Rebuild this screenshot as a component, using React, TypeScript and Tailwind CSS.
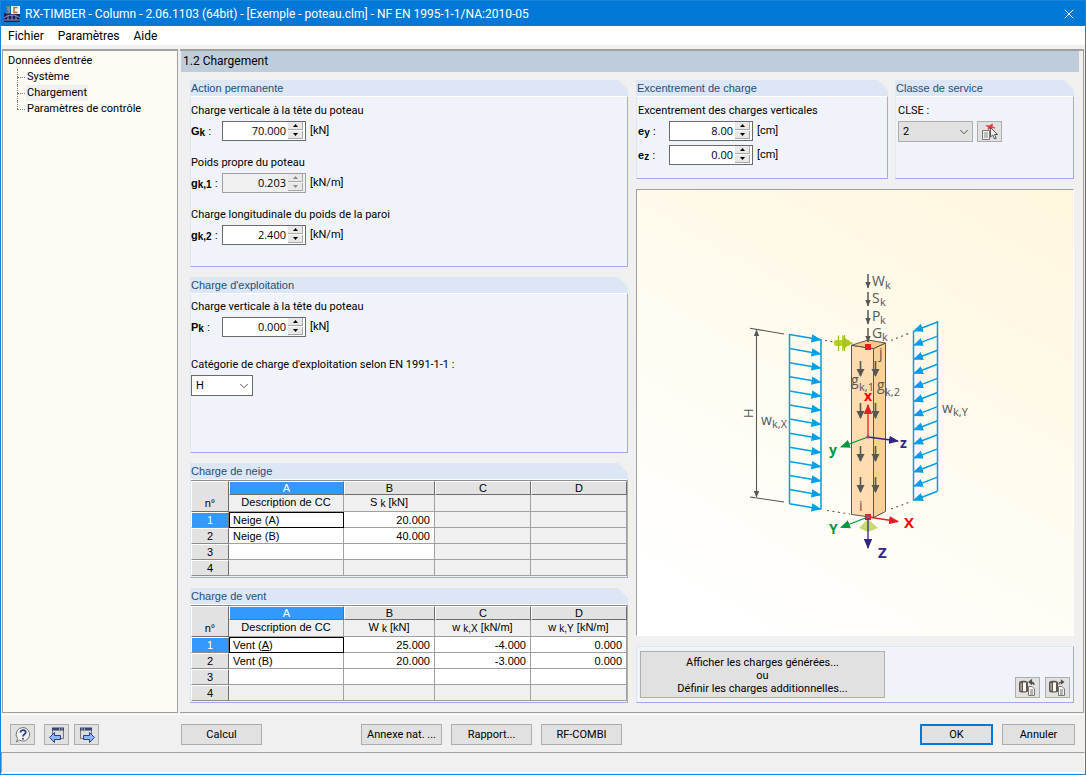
import React, { useState } from "react";
import { X, ChevronDown } from "lucide-react";

const loads = Array.from({ length: 13 }, (_, i) => i);

function Group({ title, className = "", children }: { title: string; className?: string; children: React.ReactNode }) {
  return (
    <section className={`flex flex-col ${className}`}>
      <h2 className="h-4 bg-[#dce6f4] pl-px font-['Liberation_Sans',sans-serif] text-[11px] leading-4 text-[#1f4e79] [clip-path:polygon(0_0,calc(100%-10px)_0,100%_10px,100%_100%,0_100%)]">
        {title}
      </h2>
      <div className="grow border-t border-r border-b border-l border-t-white border-r-[#a6a6e8] border-b-[#a6a6e8] border-l-[#dce6f4] bg-[#f0f4fa]">
        {children}
      </div>
    </section>
  );
}

function Sub({ children }: { children: React.ReactNode }) {
  return <span className="relative top-px text-[10px] leading-none">{children}</span>;
}

type SpinProps = { id: string; name: string; sub: string; unit: string; value: string; digits: number; disabled?: boolean };

function SpinField({ id, name, sub, unit, value, digits, disabled }: SpinProps) {
  const [current, setCurrent] = useState(value);
  const step = (delta: number) => setCurrent((Number(current) + delta).toFixed(digits));
  const arrow = disabled ? "#8a8a8a" : "#000";

  return (
    <div className="flex h-5 items-center">
      <label htmlFor={id} className="w-[31px] font-['Liberation_Sans',sans-serif] text-[11px] font-bold whitespace-nowrap">
        {name}<Sub>{sub}</Sub> <span className="font-normal">:</span>
      </label>
      <div className={`flex h-5 w-[84px] border ${disabled ? "border-[#a0a0a0] bg-[#f0f0f0]" : "border-[#6a6a6a] bg-white"}`}>
        <input
          id={id}
          value={current}
          disabled={disabled}
          onChange={e => setCurrent(e.target.value)}
          className="w-[63px] min-w-0 text-right font-['Open_Sans',sans-serif] text-[11px] outline-none"
        />
        <span className="ml-0.5 flex flex-col gap-px">
          <button aria-label="Plus" disabled={disabled} onClick={() => step(1)} className="flex h-2 w-[15px] items-center justify-center border-r border-b border-[#a8a8a8] bg-[#e8e8e8]">
            <svg width="5" height="3" viewBox="0 0 5 3"><path d="M2.5 0 5 3H0z" fill={arrow} /></svg>
          </button>
          <button aria-label="Moins" disabled={disabled} onClick={() => step(-1)} className="flex h-2 w-[15px] items-center justify-center border-r border-b border-[#a8a8a8] bg-[#e8e8e8]">
            <svg width="5" height="3" viewBox="0 0 5 3"><path d="M0 0h5L2.5 3z" fill={arrow} /></svg>
          </button>
        </span>
      </div>
      <span className="ml-1 leading-[18px]">{unit}</span>
    </div>
  );
}

function Select({ id, options, className }: { id: string; options: string[]; className: string }) {
  return (
    <div className={`grid h-[21px] items-center border ${className}`}>
      <select id={id} className="col-start-1 row-start-1 h-full w-full appearance-none pl-1 text-[11px] outline-none">
        {options.map(o => <option key={o}>{o}</option>)}
      </select>
      <ChevronDown size={14} strokeWidth={1.5} className="pointer-events-none col-start-1 row-start-1 mr-px justify-self-end text-[#404040]" />
    </div>
  );
}

function Button({ children, className }: { children: React.ReactNode; className: string }) {
  return <button className={`flex h-[21px] items-center justify-center bg-[#e1e1e1] whitespace-nowrap ${className}`}>{children}</button>;
}

function IconButton({ label, children }: { label: string; children: React.ReactNode }) {
  return (
    <button aria-label={label} className="flex h-[21px] w-[25px] items-center justify-center border border-[#adadad] bg-[#e1e1e1]">
      {children}
    </button>
  );
}

type TableProps = { heads: React.ReactNode[]; rows: React.ReactNode[][]; columns: number };

function LoadTable({ heads, rows, columns }: TableProps) {
  return (
    <table className="mb-px w-full table-fixed border-separate border-spacing-0 border-t border-[#8c8c8c] bg-[#f0f0f0] font-['Liberation_Sans',sans-serif] text-[11px] leading-3">
      <colgroup>
        <col className="w-[38px]" />
        <col className="w-[115px]" />
        <col className="w-[91px]" />
        <col />
        <col />
      </colgroup>
      <thead>
        <tr className="h-[14px]">
          <th rowSpan={2} className="border-t border-r border-b border-l border-t-white border-r-[#6e6e6e] border-b-[#6e6e6e] border-l-white bg-[#e2e2e2] p-0 pb-0.5 align-bottom font-normal">n°</th>
          {["A", "B", "C", "D"].map((letter, i) => (
            <th
              key={letter}
              className={`border-t border-r border-b border-l border-t-white border-r-[#6e6e6e] border-b-[#6e6e6e] border-l-white p-0 font-normal ${i === 0 ? "bg-[#3399ff] text-white" : "bg-[#e2e2e2]"}`}
            >
              {letter}
            </th>
          ))}
        </tr>
        <tr className="h-[17px]">
          {heads.map((head, i) => (
            <th key={i} className="border-r border-b border-[#a0a0a0] p-0 pb-0.5 font-normal whitespace-nowrap">{head}</th>
          ))}
        </tr>
      </thead>
      <tbody>
        {rows.map((row, r) => (
          <tr key={r} className="h-4">
            <th className={`border-t border-r border-b border-l border-t-white border-r-[#6e6e6e] border-b-[#8c8c8c] border-l-white p-0 font-normal ${r === 0 ? "bg-[#3399ff] text-white" : "bg-[#e2e2e2]"}`}>{r + 1}</th>
            {row.map((cell, c) => (
              <td
                key={c}
                className={`border-r border-b border-[#a0a0a0] px-1 py-0 ${c > 0 ? "text-right" : ""} ${r < 3 && c < columns ? "bg-white" : ""} ${r === 0 && c === 0 ? "outline outline-[1px] -outline-offset-1 outline-black" : ""}`}
              >
                {cell}
              </td>
            ))}
          </tr>
        ))}
      </tbody>
    </table>
  );
}

function SymbolText({ x, y, main, sub, dx, dy = 3 }: { x: number; y: number; main: string; sub: string; dx: number; dy?: number }) {
  return (
    <g fill="#575756">
      <text x={x} y={y} fontSize="14">{main}</text>
      <text x={x + dx} y={y + dy} fontSize="11">{sub}</text>
    </g>
  );
}

function Marker({ id, color }: { id: string; color: string }) {
  return (
    <marker id={id} markerUnits="userSpaceOnUse" markerWidth="10" markerHeight="9" refX="9" refY="4.5" orient="auto">
      <path d="M0 .3 10 4.5 0 8.7z" fill={color} />
    </marker>
  );
}

function ColumnDiagram() {
  return (
    <svg width="436" height="445" viewBox="0 0 436 445" className="font-['Open_Sans',sans-serif]" role="img" aria-label="Poteau">
      <defs>
        <Marker id="blue" color="#009fe3" />
        <Marker id="red" color="#e31e24" />
        <Marker id="green" color="#009640" />
        <Marker id="navy" color="#312783" />
        <marker id="gray" markerUnits="userSpaceOnUse" markerWidth="7" markerHeight="6" refX="6" refY="3" orient="auto-start-reverse">
          <path d="M0 .3 6.5 3 0 5.7z" fill="#575756" />
        </marker>
        <marker id="dark" markerUnits="userSpaceOnUse" markerWidth="9" markerHeight="9" refX="7" refY="4.5" orient="auto">
          <path d="M0 .5 8 4.5 0 8.5z" fill="#575756" />
        </marker>
      </defs>

      {/* height dimension */}
      <g stroke="#575756" strokeWidth="1.1" fill="none">
        <path d="M113 138.3 147 144M113 307 147 312" />
        <path d="M119.5 140V307" markerStart="url(#gray)" markerEnd="url(#gray)" />
        <g strokeDasharray="2 3.5">
          <path d="M188 150.5 200 152.5M254 150.5 274 142.5M190 320.5 213 324M254 319 273 312" />
        </g>
      </g>
      <text transform="translate(116 228) rotate(-90)" fontSize="13" fill="#575756">H</text>
      <SymbolText x={124} y={235} main="w" sub="k,X" dx={11} />
      <SymbolText x={305} y={223} main="w" sub="k,Y" dx={11} />

      {/* wind loads */}
      <g stroke="#009fe3" strokeWidth="1.5">
        <path d="M152.5 144V314M184 149V319.5M276.5 141V310.5M300.5 131V301" />
        {loads.map(i => (
          <g key={i}>
            <line x1="152.5" y1={144.5 + i * 14.1} x2="183.5" y2={149.8 + i * 14.1} markerEnd="url(#blue)" />
            <line x1="300.5" y1={132 + i * 14.1} x2="277" y2={141 + i * 14.1} markerEnd="url(#blue)" />
          </g>
        ))}
      </g>

      {/* timber column */}
      <g stroke="#575756" strokeWidth="1" strokeLinejoin="round">
        <path d="M214.5 155.3 236.5 158.5V327.5L214.5 324.5z" fill="#fddcaf" />
        <path d="M236.5 158.5 248.5 153V321.5L236.5 327.5z" fill="#fdd093" />
        <path d="M214.5 155.3 231 150 248.5 153 236.5 158.5z" fill="#fbc886" />
      </g>
      <g fill="#afca0b">
        <path d="M205 149.5V145l9 8-9 8v-4.5z" opacity=".85" />
        <path d="M206 150 217 153 206 157z" />
        <rect x="197" y="150" width="16" height="6" rx="2" opacity=".85" />
      </g>
      <path d="M201.5 145.5V161M207.5 145V161" stroke="#95c11f" strokeWidth="1.2" />

      {/* vertical loads */}
      <g stroke="#575756" strokeWidth="1.5">
        {[84, 102, 120, 138].map(y => <line key={y} x1="231" y1={y} x2="231" y2={y + 14} markerEnd="url(#gray)" />)}
      </g>
      <SymbolText x={235} y={96} main="W" sub="k" dx={13} />
      <SymbolText x={235} y={113} main="S" sub="k" dx={8} />
      <SymbolText x={235} y={131} main="P" sub="k" dx={8} />
      <SymbolText x={235} y={148} main="G" sub="k" dx={10} />
      <g stroke="#575756" strokeWidth="1.6">
        {[171, 213, 256, 287].map(y => (
          <g key={y}>
            <line x1="223.5" y1={y} x2="223.5" y2={y + 15} markerEnd="url(#dark)" />
            <line x1="238.5" y1={y} x2="238.5" y2={y + 15} markerEnd="url(#dark)" />
          </g>
        ))}
      </g>
      <SymbolText x={214} y={195} main="g" sub="k,1" dx={8} dy={6} />
      <SymbolText x={240} y={200} main="g" sub="k,2" dx={8} dy={6} />
      <text x="242" y="168" fontSize="14" fill="#575756">j</text>
      <text x="222" y="321" fontSize="14" fill="#575756">i</text>

      {/* local axes */}
      <g strokeWidth="1.3">
        <line x1="231" y1="247" x2="231" y2="215" stroke="#e31e24" markerEnd="url(#red)" />
        <line x1="231" y1="247" x2="204" y2="257" stroke="#009640" markerEnd="url(#green)" />
        <line x1="231" y1="247" x2="261" y2="251" stroke="#312783" markerEnd="url(#navy)" />
      </g>
      <circle cx="231" cy="247" r="1.8" fill="#a3478d" />
      <rect x="228" y="154" width="6" height="6" fill="#e31e24" />

      {/* global axes and support */}
      <path d="M231 329 241 338 231 342 222 338z" fill="#c8d96f" />
      <g strokeWidth="1.3">
        <line x1="231" y1="327" x2="204" y2="337.5" stroke="#009640" markerEnd="url(#green)" />
        <line x1="231" y1="327" x2="261" y2="331.5" stroke="#e31e24" markerEnd="url(#red)" />
      </g>
      <rect x="228" y="324" width="6" height="6" fill="#e31e24" />
      <line x1="231" y1="327" x2="231" y2="358" stroke="#312783" strokeWidth="1.3" markerEnd="url(#navy)" />
      <circle cx="231" cy="327" r="1.8" fill="#a3478d" />
      <g fontSize="14" fontWeight="700">
        <text x="227" y="211" fill="#ff0000">x</text>
        <text x="192" y="265" fill="#009640">y</text>
        <text x="263" y="258" fill="#312783">z</text>
        <text x="192" y="344" fill="#009640">Y</text>
        <text x="267" y="338" fontSize="15" fill="#ff0000">X</text>
        <text x="241" y="368" fontSize="15" fill="#312783">Z</text>
      </g>
    </svg>
  );
}

function LibraryIcon({ save }: { save?: boolean }) {
  return (
    <svg width="19" height="18" viewBox="0 0 19 18">
      <path d="M1 3.5C1 1 10 1 10 3.5V12C10 14 1 14 1 12z" fill="#5f564e" />
      <path d="M5 3.5h3v8.8H5z" fill="#fbf8f4" />
      <path d="M2.2 4h1.800v7.8H2.200z" fill="#a19a93" />
      <path d="M10.5 7.5h3.5l2.5 2.5v6.5h-6z" fill="#f4f4f4" stroke="#777" />
      <path d="M12 11h3M12 13h3M12 15h3" stroke="#777" />
      {save
        ? <path d="M11 5.5C11 3.5 12.5 3 14.5 3M13.5 1.500 15.500 3 13.500 4.500z" fill="none" stroke="#4d4d4d" strokeWidth="1.2" />
        : <path d="M16 6C16 3.500 14.500 3 12 3M13.500 1 11 3l2.500 2z" fill="#4d4d4d" stroke="#4d4d4d" strokeWidth="1.2" />}
    </svg>
  );
}

function WindowArrowIcon({ forward }: { forward?: boolean }) {
  return (
    <svg width="18" height="18" viewBox="0 0 18 18">
      <g transform={forward ? "translate(18 0) scale(-1 1)" : undefined}>
        <path d="M4.5 2.5h11v10h-11z" fill="#dcdcdc" stroke="#777" />
        <path d="M4 1.5h12v3H4z" fill="#39436f" />
        <path d="M11 3h1M13.5 3h1" stroke="#fff" />
        <path d="M1.5 11.5 6.5 6.5v3h6v4h-6v3z" fill="#8fb4f7" stroke="#22408f" strokeLinejoin="round" />
      </g>
    </svg>
  );
}

export default function App() {
  const snow = [["Neige (A)", "20.000", "", ""], ["Neige (B)", "40.000", "", ""], ["", "", "", ""], ["", "", "", ""]];
  const wind = [
    [<span key="a">Vent (<span className="underline">A</span>)</span>, "25.000", "-4.000", "0.000"],
    ["Vent (B)", "20.000", "-3.000", "0.000"],
    ["", "", "", ""],
    ["", "", "", ""],
  ];

  return (
    <div className="flex min-h-screen flex-col border border-[#1883d7] bg-[#f0f0f0] font-[Roboto,sans-serif] text-[11px] leading-4 text-black">
      <header className="flex h-[25px] items-center bg-[#0078d7] pr-2 pl-[3px] text-[12px] text-white">
        <svg width="16" height="16" viewBox="0 0 16 16">
          <path d="M0 7h16v9H0z" fill="#14245c" />
          <path d="M7 0h9v8H7z" fill="#f3efe9" />
          <path d="M13.5 1.5H10v5h3.5" fill="none" stroke="#b07040" strokeWidth="1.5" />
          <path d="M2 1h3v2H3.5v1H5v3H2" fill="none" stroke="#b98e78" strokeWidth="1.2" />
          <path d="M0 12c4-4 12-4 16 0M0 14h16M4 10v4M8 9v5M12 10v4" fill="none" stroke="#a9b4d3" strokeWidth=".8" />
        </svg>
        <h1 className="ml-[5px] grow">RX-TIMBER - Column - 2.06.1103 (64bit) - [Exemple - poteau.clm] - NF EN 1995-1-1/NA:2010-05</h1>
        <button aria-label="Fermer"><X size={16} strokeWidth={1.5} /></button>
      </header>
      <nav className="flex h-[19px] items-center gap-3.5 bg-white pl-[7px] text-[12px]">
        <button>Fichier</button>
        <button>Paramètres</button>
        <button>Aide</button>
      </nav>

      <main className="mt-1 flex grow gap-0.5 px-px">
        <aside className="w-[176px] shrink-0 border border-t-2 border-[#a0a0a0] bg-[#fcfbf3] pt-0.5">
          <p className="pl-[5px]">Données d'entrée</p>
          <ul className="ml-3.5">
            {["Système", "Chargement", "Paramètres de contrôle"].map((item, i) => (
              <li key={item} className="flex h-4 items-center">
                <span className={`relative w-[9px] self-stretch after:absolute after:top-2 after:left-0 after:w-2 after:border-t after:border-dotted after:border-[#808080] before:absolute before:top-0 before:left-0 before:border-l before:border-dotted before:border-[#808080] ${i === 2 ? "before:h-2" : "before:h-full"}`} />
                <a href="#" className={`px-px ${item === "Chargement" ? "bg-[#f0f0f0]" : ""}`}>{item}</a>
              </li>
            ))}
          </ul>
        </aside>

        <section className="flex grow flex-col border-t-2 border-r border-b border-[#a0a0a0] pl-px">
          <h2 className="mr-1 h-[21px] bg-[#bfcddb] pl-0.5 text-[12px] leading-[21px]">1.2 Chargement</h2>
          <div className="grid grow grid-cols-2 gap-2 px-[9px] pt-2 pb-[9px]">
            <div className="flex flex-col gap-2.5">
              <Group title="Action permanente">
                <div className="flex flex-col gap-[13px] pt-[5px] pb-[21px]">
                  <div className="flex flex-col gap-px">
                    <p className="leading-[18px]">Charge verticale à la tête du poteau</p>
                    <SpinField id="gk" name="G" sub="k" unit="[kN]" value="70.000" digits={3} />
                  </div>
                  <div className="flex flex-col gap-px">
                    <p className="leading-[18px]">Poids propre du poteau</p>
                    <SpinField id="gk1" name="g" sub="k,1" unit="[kN/m]" value="0.203" digits={3} disabled />
                  </div>
                  <div className="flex flex-col gap-px">
                    <p className="leading-[18px]">Charge longitudinale du poids de la paroi</p>
                    <SpinField id="gk2" name="g" sub="k,2" unit="[kN/m]" value="2.400" digits={3} />
                  </div>
                </div>
              </Group>

              <Group title="Charge d'exploitation" className="grow">
                <div className="flex flex-col gap-px pt-1">
                  <p className="leading-[18px]">Charge verticale à la tête du poteau</p>
                  <SpinField id="pk" name="P" sub="k" unit="[kN]" value="0.000" digits={3} />
                  <label htmlFor="category" className="mt-[18px] leading-[18px]">Catégorie de charge d'exploitation selon EN 1991-1-1 :</label>
                  <Select id="category" options={["H", "A", "B", "C"]} className="w-[62px] border-[#6a6a6a] bg-white" />
                </div>
              </Group>

              <Group title="Charge de neige">
                <LoadTable heads={["Description de CC", <>S <Sub>k</Sub> [kN]</>, "", ""]} rows={snow} columns={2} />
              </Group>

              <Group title="Charge de vent">
                <LoadTable
                  heads={["Description de CC", <>W <Sub>k</Sub> [kN]</>, <>w <Sub>k,X</Sub> [kN/m]</>, <>w <Sub>k,Y</Sub> [kN/m]</>]}
                  rows={wind}
                  columns={4}
                />
              </Group>
            </div>

            <div className="flex flex-col gap-2.5">
              <div className="flex gap-[7px]">
                <Group title="Excentrement de charge" className="grow">
                  <div className="flex flex-col gap-px pt-[5px] pb-[13px] pl-px">
                    <p className="leading-[18px]">Excentrement des charges verticales</p>
                    <div className="flex flex-col gap-1">
                      <SpinField id="ey" name="e" sub="y" unit="[cm]" value="8.00" digits={2} />
                      <SpinField id="ez" name="e" sub="z" unit="[cm]" value="0.00" digits={2} />
                    </div>
                  </div>
                </Group>
                <Group title="Classe de service" className="w-[179px]">
                  <div className="flex flex-col gap-px pt-[5px] pl-0.5">
                    <label htmlFor="clse" className="leading-[18px]">CLSE :</label>
                    <div className="flex gap-1">
                      <Select id="clse" options={["2", "1", "3"]} className="w-[75px] border-[#adadad] bg-[#e1e1e1]" />
                      <IconButton label="Détails">
                        <svg width="18" height="18" viewBox="0 0 18 18">
                          <path d="M1.5 7.5h7v9h-7z" fill="#f4f4f4" stroke="#777" />
                          <path d="M3 10h4M3 12h4M3 14h4" stroke="#888" />
                          <path d="M5 2.5 8 3l3.5-2L11 3.5 14 5l-4-.5L7 6.5 7.5 4z" fill="#e23a3a" stroke="#e23a3a" strokeWidth=".8" />
                          <path d="M9.5 4.5v9.500l2.200-2 1.800 4 1.800-.8-1.800-3.700h3z" fill="#eee" stroke="#555" />
                        </svg>
                      </IconButton>
                    </div>
                  </div>
                </Group>
              </div>

              <div className="flex grow items-center justify-center border border-t-[#a0a0a0] border-r-white border-b-white border-l-[#a0a0a0] bg-linear-[30deg] from-white from-10% to-[#fff6dd]">
                <ColumnDiagram />
              </div>

              <div className="flex h-[57px] items-end justify-between border border-t-[#dce6f4] border-r-[#a6a6e8] border-b-[#a6a6e8] border-l-[#dce6f4] bg-[#f0f4fa] px-[3px] pb-1">
                <button className="h-[47px] w-[245px] border border-[#adadad] bg-[#e1e1e1] pt-0.5 leading-[13px]">
                  Afficher les charges générées...<br />ou<br />Définir les charges additionnelles...
                </button>
                <div className="flex gap-[5px]">
                  <IconButton label="Importer"><LibraryIcon /></IconButton>
                  <IconButton label="Enregistrer"><LibraryIcon save /></IconButton>
                </div>
              </div>
            </div>
          </div>
        </section>
      </main>

      <footer>
        <div className="mt-px flex h-[38px] items-center border-t border-white pt-0.5 pr-[10px] pl-[9px]">
          <div className="flex w-[171px] gap-[5px]">
            <div className="mr-1">
              <IconButton label="Aide">
                <svg width="18" height="18" viewBox="0 0 18 18">
                  <path d="M9 1.5a6.8 6.8 0 1 1-3.5 12.7L2.5 16l1-3.6A6.8 6.8 0 0 1 9 1.5z" fill="#f2f2f2" stroke="#777" />
                  <path d="M6.5 6.5C6.5 3.3 12 3.5 11.7 6.5 11.5 8.2 9 8.4 9 10.5M9 12v1.6" fill="none" stroke="#2d3f7c" strokeWidth="1.8" />
                </svg>
              </IconButton>
            </div>
            <IconButton label="Précédent"><WindowArrowIcon /></IconButton>
            <IconButton label="Suivant"><WindowArrowIcon forward /></IconButton>
          </div>
          <Button className="w-[81px] border border-[#adadad]">Calcul</Button>
          <div className="ml-[99px] flex gap-[9px]">
            <Button className="w-[81px] border border-[#adadad]">Annexe nat. ...</Button>
            <Button className="w-[81px] border border-[#adadad]">Rapport...</Button>
            <Button className="w-[81px] border border-[#adadad]">RF-COMBI</Button>
          </div>
          <div className="ml-auto flex gap-[9px]">
            <Button className="w-[73px] border-2 border-[#0078d7]">OK</Button>
            <Button className="w-[73px] border border-[#adadad]">Annuler</Button>
          </div>
        </div>
        <div className="mb-px h-[21px] border border-t-[#a0a0a0] border-r-white border-b-white border-l-[#a0a0a0]" />
      </footer>
    </div>
  );
}
